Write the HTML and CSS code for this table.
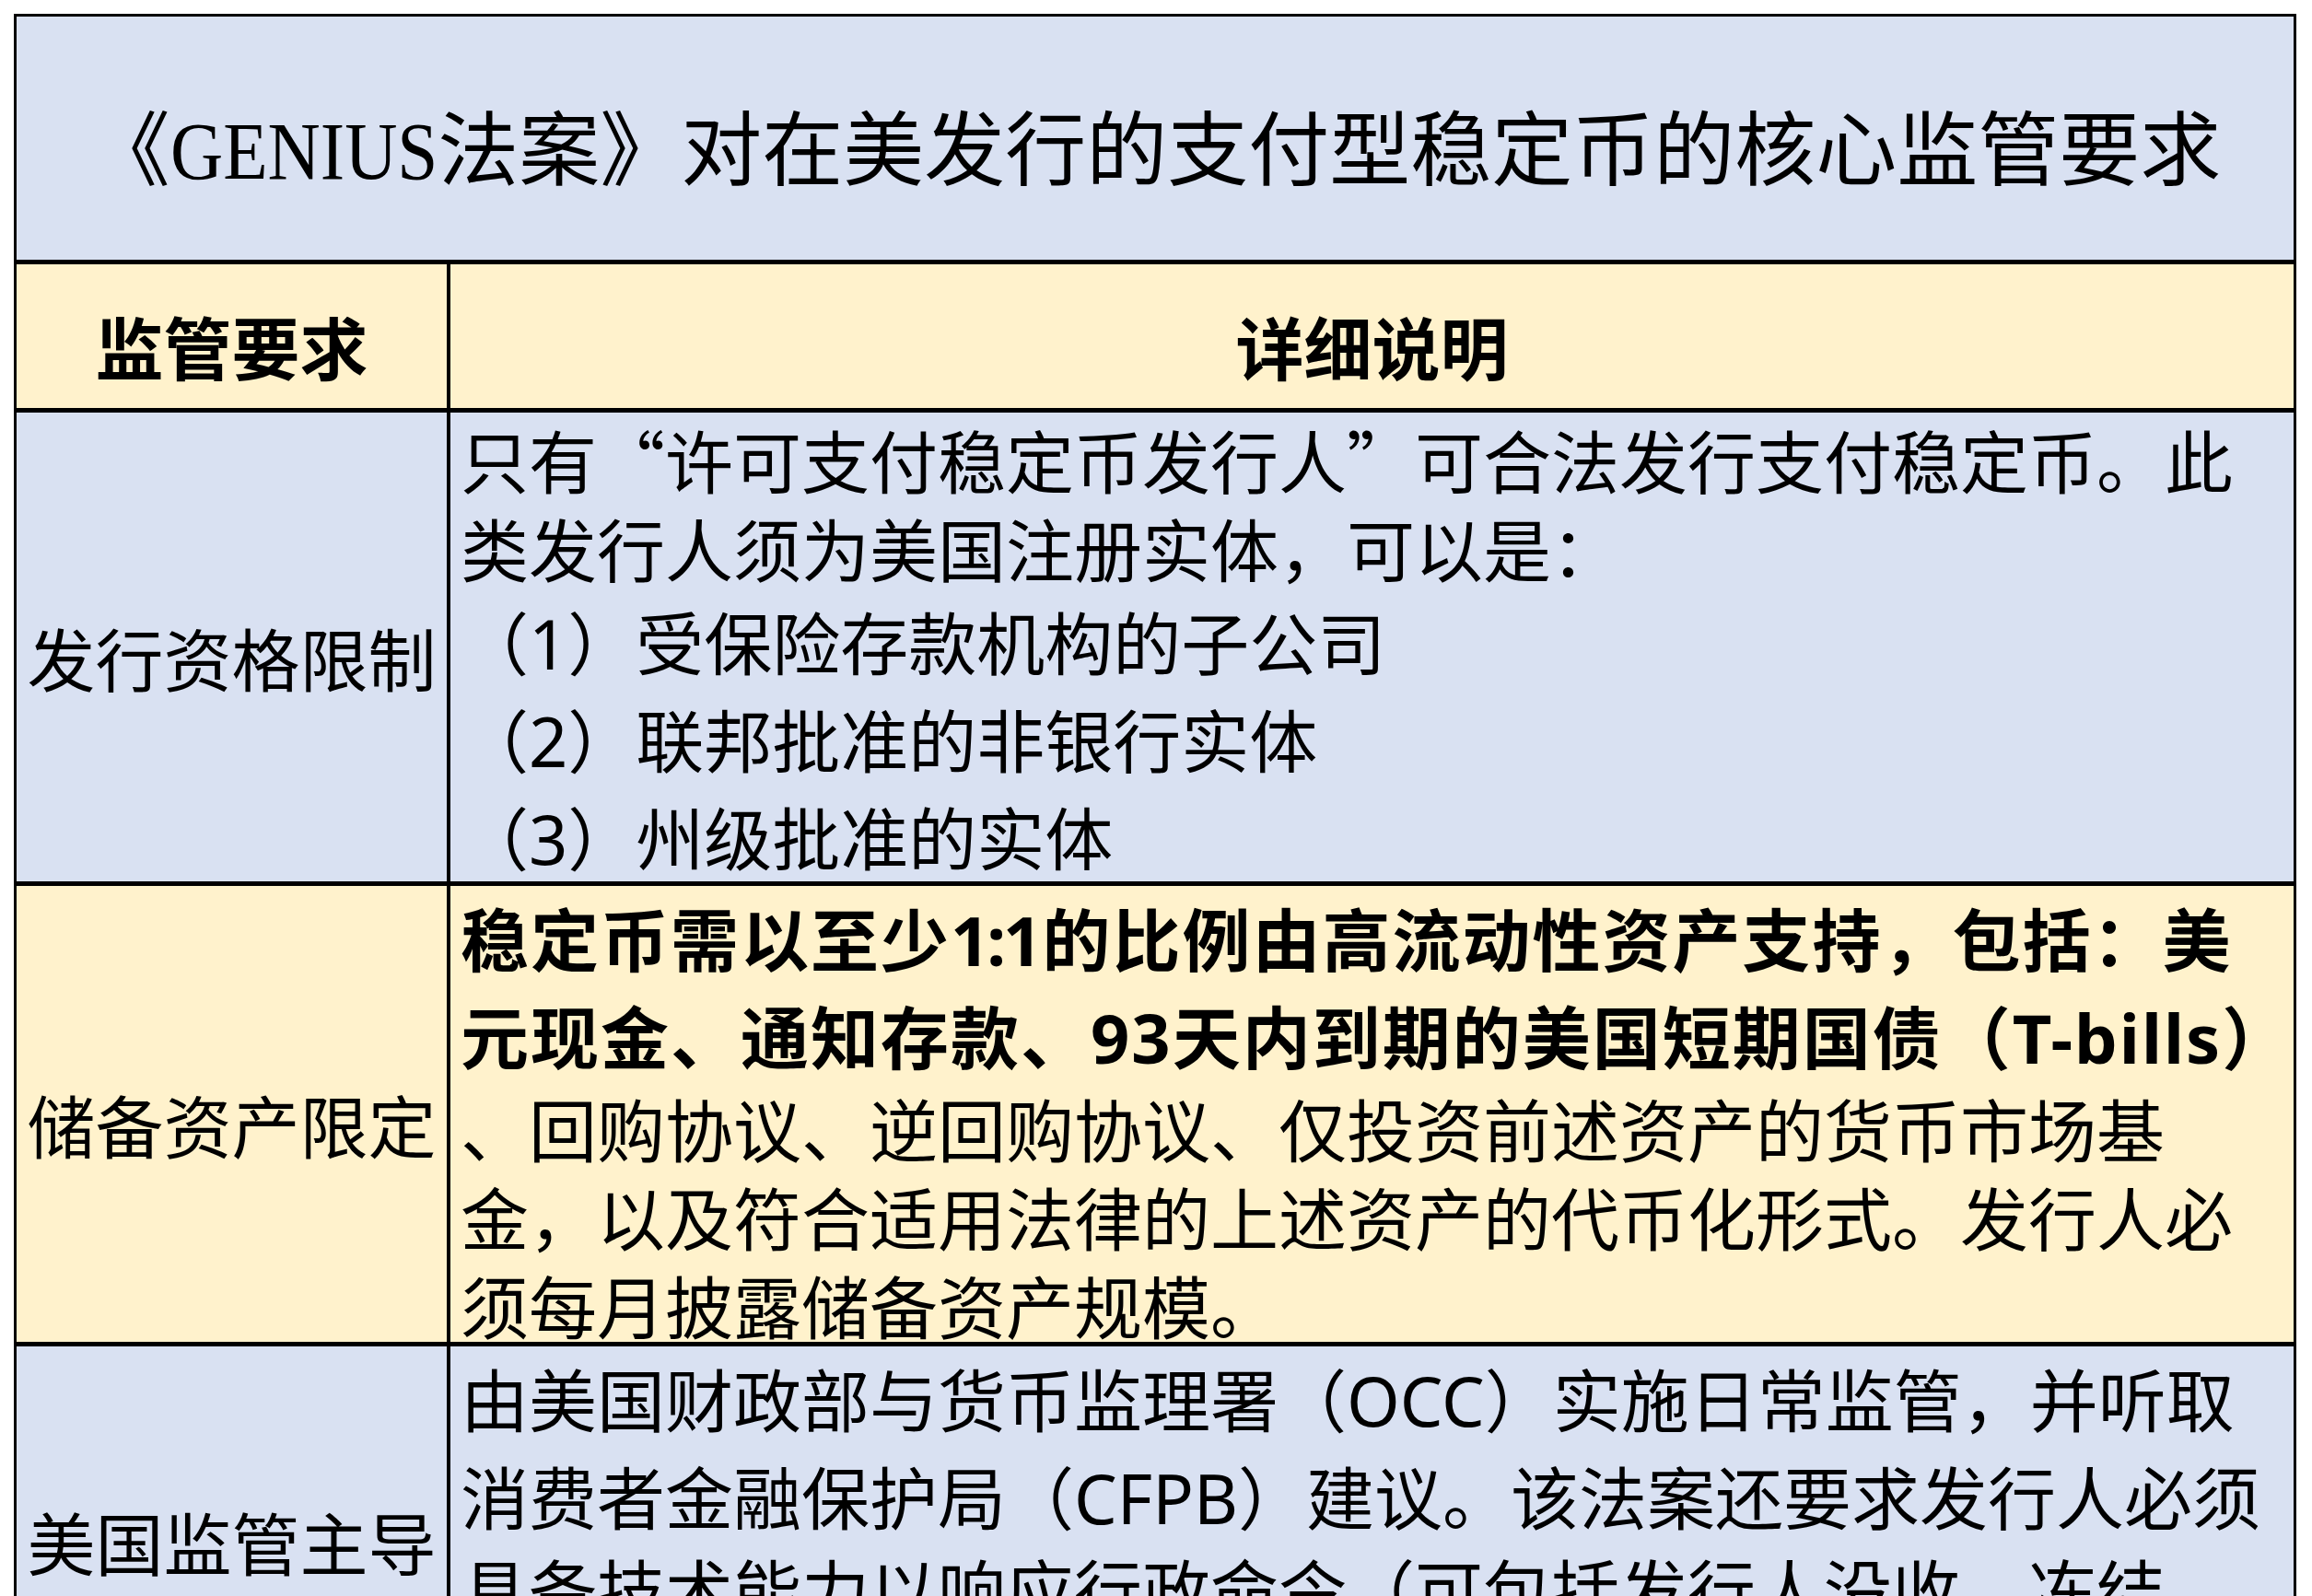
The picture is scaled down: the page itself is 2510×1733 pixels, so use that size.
FILE: index.html
```html
<!DOCTYPE html>
<html lang="zh-CN">
<head>
<meta charset="utf-8">
<title>GENIUS法案核心监管要求</title>
<link rel="stylesheet" href="styles.css">
</head>
<body>
<div class="sheet">
  <div class="cell title blue">
    <h1 class="title-text">《<span class="t-lat">GENIUS</span>法案》对在美发行的支付型稳定币的核心监管要求</h1>
  </div>

  <div class="cell hd yellow">监管要求</div>
  <div class="cell hd yellow">详细说明</div>

  <div class="cell lbl blue">发行资格限制</div>
  <div class="cell desc blue">
    <div class="ln">只有“许可支付稳定币发行人”可合法发行支付稳定币。此</div>
    <div class="ln">类发行人须为美国注册实体，可以是：</div>
    <div class="ln ln-lat">（<span class="lat">1</span>）受保险存款机构的子公司</div>
    <div class="ln ln-lat">（<span class="lat">2</span>）联邦批准的非银行实体</div>
    <div class="ln ln-lat">（<span class="lat">3</span>）州级批准的实体</div>
  </div>

  <div class="cell lbl yellow">储备资产限定</div>
  <div class="cell desc yellow">
    <div class="ln ln-lat strong">稳定币需以至少<span class="lat tight">1:1</span>的比例由高流动性资产支持，包括：美</div>
    <div class="ln ln-lat strong">元现金、通知存款、<span class="lat">93</span>天内到期的美国短期国债（<span class="lat">T-bills</span>）</div>
    <div class="ln">、回购协议、逆回购协议、仅投资前述资产的货币市场基</div>
    <div class="ln">金，以及符合适用法律的上述资产的代币化形式。发行人必</div>
    <div class="ln">须每月披露储备资产规模。</div>
  </div>

  <div class="cell lbl blue">美国监管主导</div>
  <div class="cell desc blue">
    <div class="ln ln-lat">由美国财政部与货币监理署（<span class="lat">OCC</span>）实施日常监管，并听取</div>
    <div class="ln ln-lat">消费者金融保护局（<span class="lat">CFPB</span>）建议。该法案还要求发行人必须</div>
    <div class="ln">具备技术能力以响应行政命令（可包括发行人没收、冻结</div>
  </div>
</div>
</body>
</html>
```

FILE: styles.css
```css
* {
  box-sizing: border-box;
}

body {
  margin: 0;
  background: #ffffff;
  color: #000000;
  font-family: "Noto Sans CJK SC", sans-serif;
}

.sheet {
  display: grid;
  grid-template-columns: 467px 2001px;
  grid-template-rows: 264px 156px 509px 495px 400px;
  column-gap: 4px;
  row-gap: 5px;
  padding: 3px;
  width: 2478px;
  margin: 15px 0 0 15px;
  background: #000000;
}

.blue {
  background: #d9e1f2;
}

.yellow {
  background: #fff2cc;
}

.cell {
  overflow: visible;
  white-space: nowrap;
}

.title {
  grid-column: 1 / 3;
  display: flex;
  align-items: center;
  justify-content: center;
  padding: 20px 0 0 0;
}

.title-text {
  margin: 0;
  font-size: 88px;
  font-weight: 400;
  line-height: 1.2;
}

.t-lat {
  display: inline-block;
  font-family: "Liberation Serif", serif;
  transform: scaleX(0.9);
  transform-origin: left center;
  margin-right: -32px;
}

.hd {
  display: flex;
  align-items: center;
  justify-content: center;
  padding-top: 18px;
  font-size: 74px;
  font-weight: 700;
}

.lbl {
  display: flex;
  align-items: center;
  justify-content: center;
  padding-top: 20px;
  font-size: 74px;
}

.desc {
  padding: 2px 0 0 11px;
  font-size: 74px;
}

.ln {
  height: 96px;
  line-height: 96px;
}

.ln-lat {
  height: 106px;
  line-height: 106px;
}

.strong {
  font-weight: 700;
  letter-spacing: 2px;
}

.lat {
  font-family: "Noto Sans", sans-serif;
}

.tight {
  letter-spacing: -3px;
  margin-right: 3px;
}
```
